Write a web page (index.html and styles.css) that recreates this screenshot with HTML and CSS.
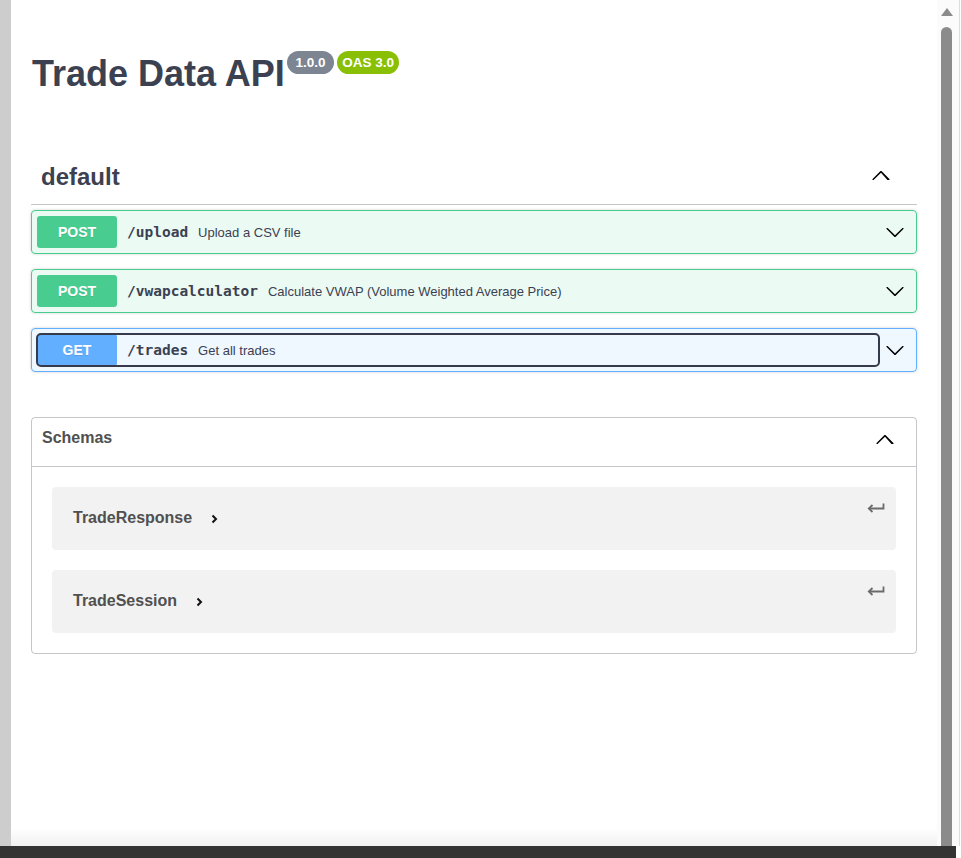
FILE: index.html
```html
<!DOCTYPE html>
<html lang="en">
<head>
<meta charset="utf-8">
<title>Trade Data API</title>
<link rel="stylesheet" href="styles.css">
</head>
<body>
<div class="frame">
  <div class="side-strip"></div>
  <main class="page">
    <div class="wrapper">
      <div class="info">
        <h2 class="title">
          <span class="title-text">Trade Data API</span>
          <small class="badge badge-version"><pre class="badge-pre"> 1.0.0 </pre></small>
          <small class="badge badge-oas"><pre class="badge-pre">OAS 3.0</pre></small>
        </h2>
      </div>

      <section class="tag-section">
        <div class="tag">
          <h3 class="tag-name">default</h3>
          <svg class="arrow arrow-tag" width="20" height="20" viewBox="0 0 20 20"><path d="M17.418 14.908c-.272.268-.709.268-.979 0L10 7.758l-7.439 7.15c-.27.268-.707.268-.979 0-.27-.268-.27-.701 0-.969l7.908-7.83c.27-.268.707-.268.979 0l7.908 7.83c.271.268.271.701.021.969z"/></svg>
        </div>

        <div class="opblock opblock-post">
          <div class="summary">
            <div class="control">
              <span class="method method-post">POST</span>
              <span class="path">/upload</span>
              <span class="desc">Upload a CSV file</span>
            </div>
            <div class="arrow-btn"><svg class="arrow" width="20" height="20" viewBox="0 0 20 20"><path d="M17.418 6.109c.272-.268.709-.268.979 0s.271.701 0 .969l-7.908 7.83c-.27.268-.707.268-.979 0l-7.908-7.83c-.27-.268-.27-.701 0-.969.271-.268.709-.268.979 0L10 13.25l7.418-7.141z"/></svg></div>
          </div>
        </div>

        <div class="opblock opblock-post">
          <div class="summary">
            <div class="control">
              <span class="method method-post">POST</span>
              <span class="path">/vwapcalculator</span>
              <span class="desc">Calculate VWAP (Volume Weighted Average Price)</span>
            </div>
            <div class="arrow-btn"><svg class="arrow" width="20" height="20" viewBox="0 0 20 20"><path d="M17.418 6.109c.272-.268.709-.268.979 0s.271.701 0 .969l-7.908 7.83c-.27.268-.707.268-.979 0l-7.908-7.83c-.27-.268-.27-.701 0-.969.271-.268.709-.268.979 0L10 13.25l7.418-7.141z"/></svg></div>
          </div>
        </div>

        <div class="opblock opblock-get">
          <div class="summary">
            <div class="control control-focus">
              <span class="method method-get">GET</span>
              <span class="path">/trades</span>
              <span class="desc">Get all trades</span>
            </div>
            <div class="arrow-btn"><svg class="arrow" width="20" height="20" viewBox="0 0 20 20"><path d="M17.418 6.109c.272-.268.709-.268.979 0s.271.701 0 .969l-7.908 7.83c-.27.268-.707.268-.979 0l-7.908-7.83c-.27-.268-.27-.701 0-.969.271-.268.709-.268.979 0L10 13.25l7.418-7.141z"/></svg></div>
          </div>
        </div>
      </section>

      <section class="models">
        <div class="models-header">
          <h4 class="models-title">Schemas</h4>
          <svg class="arrow arrow-models" width="20" height="20" viewBox="0 0 20 20"><path d="M17.418 14.908c-.272.268-.709.268-.979 0L10 7.758l-7.439 7.15c-.27.268-.707.268-.979 0-.27-.268-.27-.701 0-.969l7.908-7.83c.27-.268.707-.268.979 0l7.908 7.83c.271.268.271.701.021.969z"/></svg>
        </div>
        <div class="models-body">
          <div class="model-container">
            <span class="model-title">TradeResponse</span>
            <svg class="model-toggle" width="7" height="10" viewBox="0 0 7 10"><path d="M1.5 1.5 L5 5 L1.5 8.5" /></svg>
            <svg class="jump" width="18" height="11" viewBox="0 0 18 11"><path d="M16.5 0.5 V5.5 H2" /><path d="M5.5 2 L1.8 5.5 L5.5 9" /></svg>
          </div>
          <div class="model-container">
            <span class="model-title">TradeSession</span>
            <svg class="model-toggle" width="7" height="10" viewBox="0 0 7 10"><path d="M1.5 1.5 L5 5 L1.5 8.5" /></svg>
            <svg class="jump" width="18" height="11" viewBox="0 0 18 11"><path d="M16.5 0.5 V5.5 H2" /><path d="M5.5 2 L1.8 5.5 L5.5 9" /></svg>
          </div>
        </div>
      </section>
    </div>
  </main>
  <div class="scrollbar">
    <div class="scroll-arrow"></div>
    <div class="scroll-thumb"></div>
  </div>
  <div class="bottom-bar"></div>
</div>
</body>
</html>
```

FILE: styles.css
```css
html, body {
  margin: 0;
  padding: 0;
  background: #ffffff;
}

body {
  font-family: "Liberation Sans", Arial, sans-serif;
  color: #3b4151;
  overflow: hidden;
}

.frame {
  display: grid;
  grid-template-columns: 11px 926px 24px;
  grid-template-rows: 846px 12px;
  width: 961px;
  height: 858px;
}

.side-strip {
  background: #cdcdcd;
}

.page {
  position: relative;
  background: #ffffff;
  overflow: hidden;
}

.page::after {
  content: "";
  position: absolute;
  left: 0;
  right: 0;
  bottom: 0;
  height: 18px;
  background: linear-gradient(to bottom, rgba(240, 240, 240, 0), #f0f0f0);
}

.wrapper {
  padding: 0 20px;
}

/* ---------- Info / title ---------- */
.info {
  padding-top: 53px;
}

.title {
  display: flex;
  align-items: flex-start;
  margin: 0;
  font-size: 36px;
  line-height: 42px;
  font-weight: 700;
  color: #3b4151;
  padding-left: 1px;
}

.badge {
  display: inline-block;
  margin: -2px 0 0 3px;
  padding: 4px 5px;
  border-radius: 57px;
  background: #7d8492;
}

.badge-version {
  margin-left: 2px;
}

.badge-oas {
  background: #89bf04;
}

.badge-pre {
  margin: 0;
  font-family: "Liberation Sans", Arial, sans-serif;
  font-size: 13.5px;
  line-height: 15px;
  font-weight: 700;
  color: #ffffff;
  white-space: pre;
}

/* ---------- Tag section ---------- */
.tag-section {
  margin-top: 61px;
}

.tag {
  display: flex;
  align-items: flex-start;
  justify-content: space-between;
  padding: 7px 26px 13px 10px;
  border-bottom: 1px solid rgba(59, 65, 81, 0.3);
  margin-bottom: 5px;
}

.tag-name {
  margin: 0;
  font-size: 24px;
  line-height: 28px;
  font-weight: 700;
  color: #3b4151;
}

.arrow {
  display: block;
  fill: #000000;
}

.arrow-tag {
  margin-top: 2px;
}

.opblock {
  margin: 0 0 15px;
  border: 1px solid #000;
  border-radius: 4px;
  box-shadow: 0 0 3px rgba(0, 0, 0, 0.19);
}

.opblock-post {
  background: rgba(73, 204, 144, 0.1);
  border-color: #49cc90;
}

.opblock-get {
  background: rgba(97, 175, 254, 0.1);
  border-color: #61affe;
}

.summary {
  display: flex;
  align-items: center;
  padding: 5px;
}

.control {
  flex: 1;
  display: flex;
  align-items: center;
  border-radius: 4px;
}

.control-focus {
  outline: 2px solid #353b4a;
  outline-offset: -1px;
}

.method {
  min-width: 80px;
  padding: 8px 0;
  border-radius: 3px;
  font-size: 14px;
  line-height: 16px;
  font-weight: 700;
  text-align: center;
  color: #ffffff;
  text-shadow: 0 1px 0 rgba(0, 0, 0, 0.1);
}

.method-post {
  background: #49cc90;
}

.method-get {
  background: #61affe;
}

.path {
  padding: 0 10px;
  font-family: "DejaVu Sans Mono", monospace;
  font-size: 14.5px;
  font-weight: 700;
  color: #3b4151;
}

.desc {
  font-size: 13px;
  color: #3b4151;
}

.arrow-btn {
  width: 32px;
  display: flex;
  justify-content: center;
}

/* ---------- Models ---------- */
.models {
  margin-top: 45px;
  border: 1px solid rgba(59, 65, 81, 0.3);
  border-radius: 4px;
}

.models-header {
  display: flex;
  align-items: flex-start;
  justify-content: space-between;
  padding: 10px 21px 17px 10px;
  border-bottom: 1px solid rgba(59, 65, 81, 0.3);
}

.models-title {
  margin: 0;
  font-size: 16px;
  line-height: 19px;
  font-weight: 700;
  color: #505050;
}

.arrow-models {
  margin-top: 1px;
}

.models-body {
  display: flex;
  flex-direction: column;
  gap: 20px;
  padding: 20px;
}

.model-container {
  position: relative;
  display: flex;
  align-items: center;
  height: 63px;
  padding: 0 21px;
  box-sizing: border-box;
  border-radius: 4px;
  background: rgba(0, 0, 0, 0.05);
}

.model-title {
  font-size: 16px;
  line-height: 19px;
  font-weight: 700;
  color: #505050;
  margin-top: -2px;
}

.model-toggle {
  margin-left: 19px;
  fill: none;
  stroke: #111111;
  stroke-width: 2;
}

.jump {
  position: absolute;
  top: 16px;
  right: 11px;
  fill: none;
  stroke: #6b6b6b;
  stroke-width: 1.8;
}

/* ---------- Scrollbar & bottom chrome ---------- */
.scrollbar {
  display: flex;
  flex-direction: column;
  background: #fbfbfb;
  box-shadow: inset -1px 0 0 #dcdcdc;
  padding: 0 8px 0 4px;
  margin-right: 1px;
}

.scroll-arrow {
  height: 27px;
  display: flex;
  justify-content: center;
  padding-top: 8px;
  box-sizing: border-box;
}

.scroll-arrow::before {
  content: "";
  width: 0;
  height: 0;
  border-left: 6px solid transparent;
  border-right: 6px solid transparent;
  border-bottom: 8px solid #8b8b8b;
}

.scroll-thumb {
  flex: 1;
  width: 11px;
  background: #8b8b8b;
  border-radius: 6px 6px 0 0;
}

.bottom-bar {
  grid-column: 1 / 4;
  background: #333333;
  margin-right: 5px;
}
```
